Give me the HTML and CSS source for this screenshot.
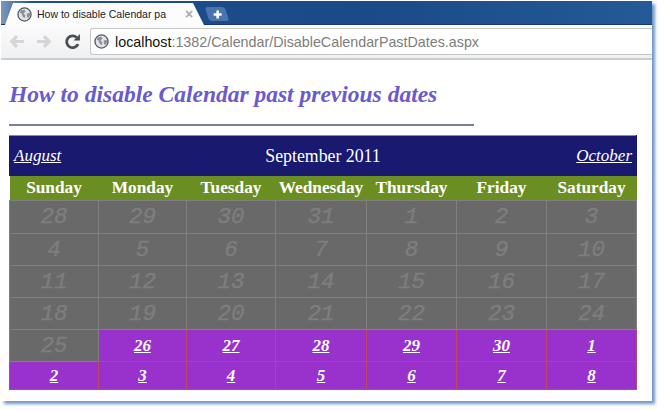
FILE: index.html
```html
<!DOCTYPE html>
<html>
<head>
<meta charset="utf-8">
<title>How to disable Calendar past previous dates</title>
<link rel="stylesheet" href="styles.css">
</head>
<body>
<svg class="defs" width="0" height="0">
  <symbol id="globe" viewBox="0 0 16 16">
    <circle cx="8" cy="8" r="7" fill="#dfe3e8" stroke="#55595f" stroke-width="1.4"/>
    <path d="M4 3.500 8 3l1 2-2 2 2 2-1 3-2-2-1-3-2-1zM10.500 7l3-1 .5 3-2 3-1.500-2z" fill="#8b9098"/>
  </symbol>
</svg>
<div class="window">
  <div class="tabstrip">
    <div class="tab">
      <svg class="favicon"><use href="#globe"/></svg>
      <span class="tab-title">How to disable Calendar pa</span>
      <span class="tab-close">×</span>
    </div>
    <div class="newtab">
      <svg width="11" height="11" viewBox="0 0 11 11"><path d="M5.500 1.500v8M1.500 5.500h8" stroke="#fff" stroke-width="2.600"/></svg>
    </div>
  </div>
  <div class="toolbar">
    <svg class="nav" viewBox="0 0 16 16"><path d="M15 8H4M8.500 3 3.500 8l5 5" fill="none" stroke="#d3d5d8" stroke-width="3"/></svg>
    <svg class="nav" viewBox="0 0 16 16"><path d="M1 8h11M7.500 3l5 5-5 5" fill="none" stroke="#d3d5d8" stroke-width="3"/></svg>
    <svg class="nav reload" viewBox="0 0 16 16"><path d="M13.200 10.500A5.600 5.600 0 1 1 12 4.200" fill="none" stroke="#4b4e52" stroke-width="2.600"/><path d="M9 7h6V1z" fill="#4b4e52"/></svg>
    <div class="omnibox">
      <svg class="favicon"><use href="#globe"/></svg>
      <span class="url"><span class="host">localhost</span>:1382/Calendar/DisableCalendarPastDates.aspx</span>
    </div>
  </div>
  <div class="page">
    <h1 class="heading">How to disable Calendar past previous dates</h1>
    <div class="rule"></div>
    <table class="calendar">
      <colgroup>
        <col class="c1"><col class="c2"><col class="c3"><col class="c4"><col class="c5"><col class="c6"><col class="c7">
      </colgroup>
      <tr class="title-row">
        <td colspan="7">
          <div class="title-bar">
            <a class="month-link">August</a>
            <span class="month-name">September 2011</span>
            <a class="month-link next">October</a>
          </div>
        </td>
      </tr>
      <tr class="head-row">
        <th>Sunday</th><th>Monday</th><th>Tuesday</th><th>Wednesday</th><th>Thursday</th><th>Friday</th><th>Saturday</th>
      </tr>
      <tr class="week first">
        <td class="past">28</td><td class="past">29</td><td class="past">30</td><td class="past">31</td><td class="past">1</td><td class="past">2</td><td class="past">3</td>
      </tr>
      <tr class="week">
        <td class="past">4</td><td class="past">5</td><td class="past">6</td><td class="past">7</td><td class="past">8</td><td class="past">9</td><td class="past">10</td>
      </tr>
      <tr class="week">
        <td class="past">11</td><td class="past">12</td><td class="past">13</td><td class="past">14</td><td class="past">15</td><td class="past">16</td><td class="past">17</td>
      </tr>
      <tr class="week">
        <td class="past">18</td><td class="past">19</td><td class="past">20</td><td class="past">21</td><td class="past">22</td><td class="past">23</td><td class="past">24</td>
      </tr>
      <tr class="week">
        <td class="past">25</td><td class="day"><a>26</a></td><td class="day"><a>27</a></td><td class="day"><a>28</a></td><td class="day"><a>29</a></td><td class="day"><a>30</a></td><td class="day"><a>1</a></td>
      </tr>
      <tr class="week last">
        <td class="day"><a>2</a></td><td class="day"><a>3</a></td><td class="day"><a>4</a></td><td class="day"><a>5</a></td><td class="day"><a>6</a></td><td class="day"><a>7</a></td><td class="day"><a>8</a></td>
      </tr>
    </table>
  </div>
</div>
</body>
</html>
```
FILE: styles.css
```css
html, body {
  margin: 0;
  height: 100%;
  background: #fff;
  overflow: hidden;
}
.defs {
  position: absolute;
}
.window {
  box-sizing: border-box;
  width: 651px;
  height: 400px;
  margin: 1px 0 0 1px;
  background: #fff;
  box-shadow: 3px 3px 3px #6f97c6;
  display: flex;
  flex-direction: column;
}
.tabstrip {
  height: 24px;
  background: linear-gradient(90deg, #7d97bd 0, #1d4f8c 5%, #1a4a87 55%, #245a96 100%);
  border-bottom: 1px solid #17396b;
  display: flex;
  align-items: flex-end;
  padding-left: 4px;
  box-sizing: border-box;
  flex: none;
}
.tab {
  width: 199px;
  height: 22px;
  box-sizing: border-box;
  margin-bottom: -1px;
  background: #fcfcfd;
  clip-path: polygon(0 100%, 8px 0, calc(100% - 11px) 0, 100% 100%);
  display: flex;
  align-items: center;
  padding: 0 0 0 12px;
  gap: 5px;
  font: 10.500px "Liberation Sans", sans-serif;
  color: #222;
  white-space: nowrap;
}
.favicon {
  width: 15px;
  height: 15px;
  flex: none;
}
.tab-title {
  width: 143px;
  overflow: hidden;
}
.tab-close {
  color: #a9abae;
  font-size: 14px;
  font-weight: bold;
}
.newtab {
  width: 20px;
  height: 14px;
  margin: 0 0 3px 3px;
  background: #4a74ab;
  transform: skewX(18deg);
  border-radius: 3px;
  display: flex;
  align-items: center;
  justify-content: center;
}
.newtab svg {
  transform: skewX(-18deg);
}
.toolbar {
  flex: none;
  height: 35px;
  box-sizing: border-box;
  background: linear-gradient(#fbfbfc, #eff0f1);
  border-bottom: 2px solid #c9cdcf;
  display: flex;
  align-items: center;
  padding-left: 7px;
}
.nav {
  width: 17px;
  height: 17px;
  margin-right: 11px;
  flex: none;
}
.reload {
  margin-right: 9px;
}
.omnibox {
  flex: 1;
  height: 27px;
  box-sizing: border-box;
  background: #fff;
  border: 1px solid #c5c7c9;
  border-right: 0;
  border-radius: 3px 0 0 3px;
  display: flex;
  align-items: center;
  padding-left: 3px;
  gap: 6px;
  font: 14.300px "Liberation Sans", sans-serif;
  color: #7d7d7d;
  white-space: nowrap;
}
.host {
  color: #111;
}
.page {
  flex: 1;
  padding: 0 0 0 8px;
}
.heading {
  margin: 21px 0 0;
  font: italic bold 23.500px/26px "Liberation Serif", serif;
  color: #6a5acd;
  white-space: nowrap;
}
.rule {
  width: 465px;
  height: 2px;
  margin: 17px 0 9px;
  background: #75809f;
}
.calendar {
  border-collapse: collapse;
  table-layout: fixed;
  width: 627px;
  font-family: "Liberation Serif", serif;
  color: #fff;
}
.c1 { width: 89px; }
.c2 { width: 88px; }
.c3 { width: 89px; }
.c4 { width: 91px; }
.c5 { width: 90px; }
.c6 { width: 90px; }
.c7 { width: 90px; }
.title-row td {
  height: 40px;
  padding: 0 4px;
  background: #191970;
  border: 1px solid #191970;
  border-top-color: #8b8b9e;
  border-bottom: 0;
}
.title-bar {
  display: grid;
  grid-template-columns: 1fr auto 1fr;
  align-items: center;
  font-size: 17px;
}
.month-name {
  font-size: 17.800px;
}
.month-link {
  font-style: italic;
  text-decoration: underline;
}
.month-link.next {
  justify-self: end;
}
.head-row th {
  height: 24px;
  padding: 0;
  background: #6b8e23;
  font-size: 17.300px;
  font-weight: bold;
  border: 0;
}
.week td {
  height: 31px;
  padding: 0;
  text-align: center;
}
.week.first td {
  height: 32px;
}
.week.last td {
  height: 27px;
  border-bottom-color: #dc3f52;
}
.past {
  background: #696969;
  color: #7e7e7e;
  border: 1px solid #808080;
  font: italic 22.500px "Liberation Mono", monospace;
  -webkit-text-stroke: 0.4px #7e7e7e;
}
.day {
  background: #9932cc;
  border: 1px solid #bd4a5c;
  font-size: 17px;
  font-weight: bold;
  font-style: italic;
}
.day a {
  text-decoration: underline;
}
```
